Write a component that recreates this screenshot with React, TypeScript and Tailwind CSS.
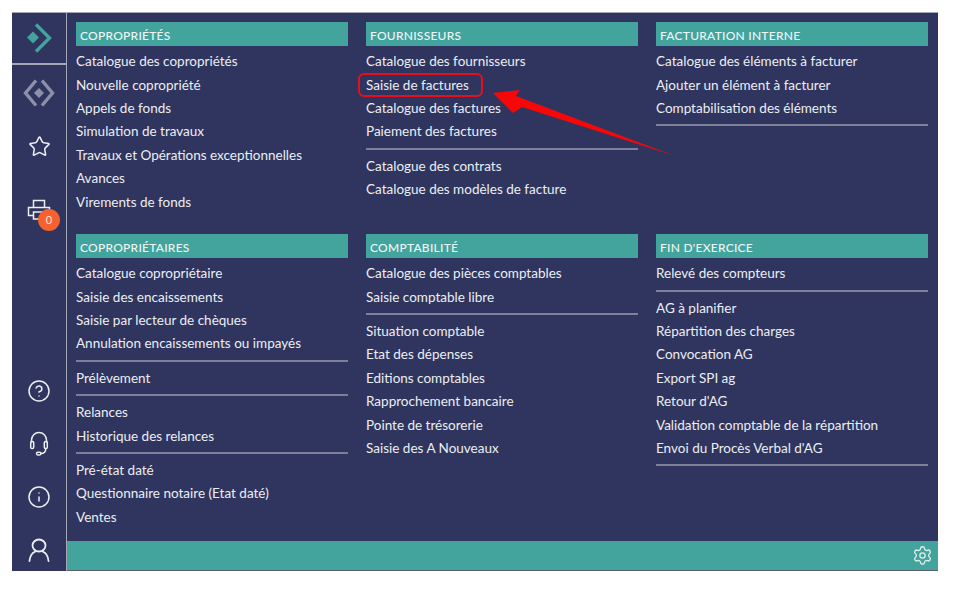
import React from "react";
import { Star, CircleHelp, Info, Settings } from "lucide-react";

type Entry = string | null;
const Item = ({ children }: { children: string }) => (
  <a className="block h-[23.4px] leading-[23.4px] text-[13.5px] text-[#eceef2] whitespace-nowrap">{children}</a>
);
const Section = ({ title, items }: { title: string; items: Entry[] }) => (
  <section>
    <h2 className="h-6 leading-[28px] bg-[#43a39d] px-1 text-[12px] tracking-[0.25px] font-medium text-[#eef6f5] uppercase mb-[4.200px]">{title}</h2>
    {items.map((it, i) =>
      it === null ? <hr key={i} className="mt-[4px] mb-[5px] border-0 h-[2px] bg-[#7d8096]" /> : <Item key={i}>{it}</Item>
    )}
  </section>
);

const Logo = () => (
  <svg width="26" height="30" viewBox="0 0 26 30" fill="none">
    <path d="M1 14.500l6-6 6 6-6 6z" fill="#43a39d" />
    <path d="M10 1.500L23.500 15 10 28.500" stroke="#43a39d" strokeWidth="3.400" />
  </svg>
);
const Diamond = () => (
  <svg width="32" height="32" viewBox="0 0 32 32" fill="none">
    <path d="M13 3.500L2.500 16 13 28.500M19 3.500L29.500 16 19 28.500" stroke="#8d90a8" strokeWidth="3.400" />
    <path d="M16 11l5 5-5 5-5-5z" fill="#8d90a8" />
  </svg>
);
const Printer = () => (
  <svg width="24" height="24" viewBox="0 0 24 24" fill="none" stroke="#eceef2" strokeWidth="1.500">
    <path d="M6.500 9V2.500h11V9" />
    <path d="M6.500 17.500H1.500V9.500h21v4" />
    <path d="M6.500 14h9v7h-9z" />
  </svg>
);
const Headset = () => (
  <svg width="24" height="26" viewBox="0 0 24 26" fill="none" stroke="#eceef2" strokeWidth="1.500" strokeLinecap="round">
    <path d="M4.500 11V9a7.500 7.500 0 0 1 15 0v2" />
    <rect x="3.700" y="10.500" width="3" height="7" rx="1.300" />
    <rect x="17.300" y="10.500" width="3" height="7" rx="1.300" />
    <path d="M18.800 17.500c0 3-2 5-5 5" />
    <rect x="9.500" y="21.300" width="4.500" height="2.600" rx="1.300" />
  </svg>
);
const Person = () => (
  <svg width="26" height="26" viewBox="0 0 26 26" fill="none" stroke="#eceef2" strokeWidth="1.800" strokeLinecap="round">
    <ellipse cx="13" cy="8.500" rx="6.500" ry="6" />
    <path d="M3.500 24c.5-5 3-8.500 6-9.500M22.500 24c-.5-5-3-8.500-6-9.500" />
  </svg>
);

const col1a: Entry[] = ["Catalogue des copropriétés","Nouvelle copropriété","Appels de fonds","Simulation de travaux","Travaux et Opérations exceptionnelles","Avances","Virements de fonds"];
const col2a: Entry[] = ["Catalogue des fournisseurs","Saisie de factures","Catalogue des factures","Paiement des factures",null,"Catalogue des contrats","Catalogue des modèles de facture"];
const col3a: Entry[] = ["Catalogue des éléments à facturer","Ajouter un élément à facturer","Comptabilisation des éléments",null];
const col1b: Entry[] = ["Catalogue copropriétaire","Saisie des encaissements","Saisie par lecteur de chèques","Annulation encaissements ou impayés",null,"Prélèvement",null,"Relances","Historique des relances",null,"Pré-état daté","Questionnaire notaire (Etat daté)","Ventes"];
const col2b: Entry[] = ["Catalogue des pièces comptables","Saisie comptable libre",null,"Situation comptable","Etat des dépenses","Editions comptables","Rapprochement bancaire","Pointe de trésorerie","Saisie des A Nouveaux"];
const col3b: Entry[] = ["Relevé des compteurs",null,"AG à planifier","Répartition des charges","Convocation AG","Export SPI ag","Retour d'AG","Validation comptable de la répartition","Envoi du Procès Verbal d'AG",null];

export default function App() {
  return (
    <div className="relative h-[595px] w-[953px] overflow-hidden bg-white pl-3 pt-3" style={{ fontFamily: 'Lato, sans-serif' }}>
      <div className="flex h-[559px] w-[926px] bg-[#2f355f] border-t border-[#a4a7b5]">
        <aside className="flex w-[55px] shrink-0 flex-col border-r border-[#a4a7b5]">
          <div className="flex h-[52px] w-[55px] items-center justify-center border-b-2 border-r border-[#a4a7b5] bg-[#2f355f]"><Logo /></div>
          <div className="flex h-[55px] items-center justify-center"><Diamond /></div>
          <div className="flex h-[52px] items-center justify-center"><Star size={23} strokeWidth={1.6} color="#eceef2" /></div>
          <div className="relative flex h-[76px] items-center justify-center">
            <Printer />
            <span className="absolute left-[26px] top-[37px] flex h-[22px] w-[22px] items-center justify-center rounded-full bg-[#f4622f] text-[11px] text-[#f6e6dc]">0</span>
          </div>
          <div className="mt-auto flex flex-col items-center gap-[28px] pb-[8px]">
            <CircleHelp size={24} strokeWidth={1.5} color="#eceef2" />
            <Headset />
            <Info size={24} strokeWidth={1.5} color="#eceef2" />
            <Person />
          </div>
        </aside>
        <div className="flex min-w-0 flex-1 flex-col">
          <main className="grid flex-1 grid-cols-[272px_272px_272px] grid-rows-[212px_1fr] gap-x-[18px] pl-[9px] pt-[9px]">
            <Section title="Copropriétés" items={col1a} />
            <Section title="Fournisseurs" items={col2a} />
            <Section title="Facturation interne" items={col3a} />
            <Section title="Copropriétaires" items={col1b} />
            <Section title="Comptabilité" items={col2b} />
            <Section title="Fin d'exercice" items={col3b} />
          </main>
          <footer className="flex h-[30px] items-center justify-end bg-[#43a39d] border-b border-[#5a5f70] pr-[5px] pb-[1px]">
            <Settings size={21} strokeWidth={1.5} color="#dff0ee" />
          </footer>
        </div>
      </div>
      <div className="absolute left-[358px] top-[73px] h-[24px] w-[125px] rounded-[6px] border-2 border-[#e5101c]" />
      <svg className="absolute left-0 top-0 pointer-events-none" width="953" height="595" viewBox="0 0 953 595">
        <polygon points="493,93 520,90 516,96 675,156 522,107 513,113" fill="#f60808" />
      </svg>
    </div>
  );
}
